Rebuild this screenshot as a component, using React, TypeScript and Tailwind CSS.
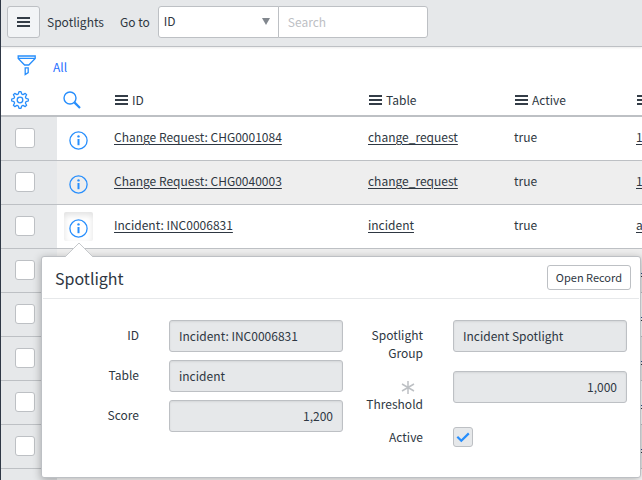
import { useState, type ReactNode } from "react";

type Row = { id: string; table: string; active: string; next: string };

const rows: Row[] = [
  { id: "Change Request: CHG0001084", table: "change_request", active: "true", next: "1" },
  { id: "Change Request: CHG0040003", table: "change_request", active: "true", next: "1" },
  { id: "Incident: INC0006831", table: "incident", active: "true", next: "a" },
  { id: "", table: "", active: "", next: "1" },
  { id: "", table: "", active: "", next: "1" },
  { id: "", table: "", active: "", next: "1" },
  { id: "", table: "", active: "", next: "1" },
  { id: "", table: "", active: "", next: "1" },
  { id: "", table: "", active: "", next: "" },
];

const MenuIcon = () => (
  <svg width="13" height="10" viewBox="0 0 13 10" fill="#343d47" className="shrink-0" aria-hidden="true">
    <path d="M0 0h13v2H0zM0 4h13v2H0zM0 8h13v2H0z" />
  </svg>
);

const FilterIcon = () => (
  <svg width="20" height="21" viewBox="0 0 20 21" fill="none" stroke="#278efc" strokeWidth="1.3" aria-hidden="true">
    <path d="M1.2 1h17v2.4l-6.4 6.6H7.6L1.2 3.4zM1.2 3.4h17M8.2 12.8h3v4.8l-3 2z" />
  </svg>
);

const GearIcon = () => (
  <svg width="18" height="18" viewBox="0 0 18 18" fill="none" stroke="#278efc" strokeWidth="1.3" strokeLinejoin="round" aria-hidden="true">
    <path d="M7.3 3 8 .7h2l.7 2.3 1.3.6 2.2-1.2 1.4 1.4L14.4 6l.6 1.3 2.3.7v2l-2.3.7-.6 1.3 1.2 2.2-1.4 1.4-2.2-1.2-1.3.6-.7 2.3H8L7.3 15 6 14.4l-2.2 1.2-1.4-1.4L3.6 12 3 10.7.7 10V8L3 7.3 3.6 6 2.4 3.8l1.4-1.4L6 3.6z" />
    <circle cx="9" cy="9" r="2.8" />
  </svg>
);

const SearchIcon = () => (
  <svg width="18" height="18" viewBox="0 0 18 18" fill="none" stroke="#278efc" aria-hidden="true">
    <circle cx="7" cy="7" r="6" strokeWidth="1.4" />
    <path d="m11.4 11.4 5.6 5.6" strokeWidth="2.2" />
  </svg>
);

const InfoIcon = () => (
  <svg width="19" height="19" viewBox="0 0 19 19" fill="none" stroke="#278efc" aria-hidden="true">
    <circle cx="9.5" cy="9.5" r="8.6" strokeWidth="1.3" />
    <path d="M9.5 8v6.2" strokeWidth="2" />
    <circle cx="9.5" cy="5.4" r="1.2" fill="#278efc" stroke="none" />
  </svg>
);

const HeaderCell = ({ children }: { children?: ReactNode }) => (
  <th className="overflow-hidden pr-2 pl-[9px] text-left font-normal whitespace-nowrap">
    <span className="flex items-center gap-1">
      <MenuIcon />
      {children}
    </span>
  </th>
);

const Field = ({ id, label, value, numeric }: { id: string; label: ReactNode; value: string; numeric?: boolean }) => (
  <div className="flex gap-[30px]">
    <label htmlFor={id} className="w-20 shrink-0 pt-[6px] text-right leading-[18px]">
      {label}
    </label>
    <input
      id={id}
      readOnly
      defaultValue={value}
      className={`h-8 w-0 min-w-0 flex-1 rounded-[3px] border border-[#bdc0c4] bg-[#e6e8ea] px-[9px] pb-[2px] shadow-[inset_0_1px_2px_rgba(0,0,0,0.08)] outline-none ${
        numeric ? "text-right" : ""
      }`}
    />
  </div>
);

const Popover = () => (
  <section
    aria-label="Spotlight"
    className="absolute top-[256px] right-px left-10 rounded-[3px] border border-[#bdc0c4] bg-white pb-[30px] shadow-[0_2px_8px_rgba(0,0,0,0.3)]"
  >
    <svg width="28" height="15" viewBox="0 0 28 15" className="absolute -top-[15px] left-[23px]" aria-hidden="true">
      <path d="M0 15 14 1l14 14" fill="#fff" stroke="#c6c9cc" />
    </svg>
    <header className="mx-px flex h-[42px] items-center justify-between border-b border-[#e6e8ea] pr-2 pl-3">
      <h2 className="text-base">Spotlight</h2>
      <button className="h-[25px] rounded-[3px] border border-[#bdc0c4] bg-white px-2 pb-[2px] text-[11px]">Open Record</button>
    </header>
    <div className="grid grid-cols-2 pt-[21px] pr-[13px] pl-[17px]">
      <div className="flex flex-col gap-2">
        <Field id="f-id" label="ID" value="Incident: INC0006831" />
        <Field id="f-table" label="Table" value="incident" />
        <Field id="f-score" label="Score" value="1,200" numeric />
      </div>
      <div className="flex flex-col gap-[9px]">
        <Field id="f-group" label="Spotlight Group" value="Incident Spotlight" />
        <Field
          id="f-threshold"
          label={
            <>
              <svg width="14" height="18" viewBox="0 0 14 18" stroke="#bdc0c4" strokeWidth="1.5" className="mr-2 ml-auto" aria-hidden="true">
                <path d="M7 4v13M1 7l12 7M13 7 1 14" />
              </svg>
              Threshold
            </>
          }
          value="1,000"
          numeric
        />
        <div className="flex gap-[30px]">
          <label htmlFor="f-active" className="w-20 shrink-0 pt-[6px] text-right leading-[18px]">
            Active
          </label>
          <span className="relative mt-[5px] h-5 w-5">
            <input
              id="f-active"
              type="checkbox"
              defaultChecked
              className="block h-5 w-5 appearance-none rounded-[3px] border border-[#bdc0c4] bg-[#e6e8ea]"
            />
            <svg width="20" height="20" viewBox="0 0 20 20" fill="none" stroke="#278efc" strokeWidth="2.2" className="pointer-events-none absolute inset-0" aria-hidden="true">
              <path d="m4.3 9.8 4 4 7.5-7.4" />
            </svg>
          </span>
        </div>
      </div>
    </div>
  </section>
);

export default function App() {
  const [open, setOpen] = useState(2);

  return (
    <div className="relative h-screen overflow-hidden border-l border-[#2f3846] bg-white font-['Noto_Sans_CJK_SC','Noto_Sans',sans-serif] text-xs leading-[18px] text-[#2e3742]">
      <nav className="flex h-[47px] items-center border-b border-[#bdc0c4] bg-[#e6e8ea] pb-[2px] pl-[6px] shadow-[0_1px_2px_rgba(0,0,0,0.08)]">
        <button aria-label="Menu" className="flex h-8 w-[33px] items-center justify-center rounded-[3px] border border-[#bdc0c4] bg-[#f2f4f6]">
          <MenuIcon />
        </button>
        <h1 className="ml-[7px]">Spotlights</h1>
        <label htmlFor="goto" className="mr-2 ml-4">
          Go to
        </label>
        <span className="relative">
          <select id="goto" className="block h-8 w-[121px] appearance-none rounded-l-[3px] border border-[#bdc0c4] bg-white px-[5px] pb-[2px]">
            <option>ID</option>
            <option>Table</option>
            <option>Active</option>
          </select>
          <svg width="8" height="7" viewBox="0 0 8 7" fill="#81878e" className="pointer-events-none absolute top-3 right-[9px]" aria-hidden="true">
            <path d="M0 0h8L4 7z" />
          </svg>
        </span>
        <input
          aria-label="Search"
          placeholder="Search"
          className="-ml-px h-8 w-[150px] rounded-r-[3px] border border-[#bdc0c4] bg-white px-[9px] pb-[2px] placeholder:text-[#bdc0c4]"
        />
      </nav>

      <div className="flex h-[37px] items-center gap-4 pl-4">
        <button aria-label="Filter">
          <FilterIcon />
        </button>
        <a href="#all" className="pt-[2px] text-[#1f6fff]">
          All
        </a>
      </div>

      <table className="w-full table-fixed border-collapse">
        <colgroup>
          <col className="w-14" />
          <col className="w-[49px]" />
          <col className="w-[254px]" />
          <col className="w-[146px]" />
          <col className="w-[122px]" />
          <col />
        </colgroup>
        <thead>
          <tr className="h-8 border-b-2 border-[#bdc0c4]">
            <th className="pl-[10px] text-left">
              <button aria-label="Settings" className="block">
                <GearIcon />
              </button>
            </th>
            <th className="pl-[6px] text-left">
              <button aria-label="Search rows" className="block">
                <SearchIcon />
              </button>
            </th>
            <HeaderCell>ID</HeaderCell>
            <HeaderCell>Table</HeaderCell>
            <HeaderCell>Active</HeaderCell>
            <HeaderCell />
          </tr>
        </thead>
        <tbody>
          {rows.map((r, i) => (
            <tr key={i} className="h-11 border-b border-[#bdc0c4] even:bg-[#eeeeee]">
              <td className="bg-[#e6e8ea] pl-[14px]">
                <input
                  type="checkbox"
                  aria-label={`Select row ${i + 1}`}
                  className="block h-5 w-5 appearance-none rounded-[3px] border border-[#bdc0c4] bg-white"
                />
              </td>
              <td className="pl-[7px]">
                {r.id && (
                  <button
                    aria-label={`Preview ${r.id}`}
                    onClick={() => setOpen(open === i ? -1 : i)}
                    className={`flex h-[29px] w-[29px] items-center justify-center rounded-[2px] pt-1 ${
                      open === i ? "shadow-[inset_0_3px_6px_rgba(0,0,0,0.12)]" : ""
                    }`}
                  >
                    <InfoIcon />
                  </button>
                )}
              </td>
              <td className="px-2 pb-[2px]">
                <a href="#record" className="underline underline-offset-2">
                  {r.id}
                </a>
              </td>
              <td className="px-2 pb-[2px]">
                <a href="#table" className="underline underline-offset-2">
                  {r.table}
                </a>
              </td>
              <td className="px-2 pb-[2px]">{r.active}</td>
              <td className="pb-[2px] pl-2">
                <a href="#next" className="underline underline-offset-2">
                  {r.next}
                </a>
              </td>
            </tr>
          ))}
        </tbody>
      </table>

      {open >= 0 && <Popover />}
    </div>
  );
}
